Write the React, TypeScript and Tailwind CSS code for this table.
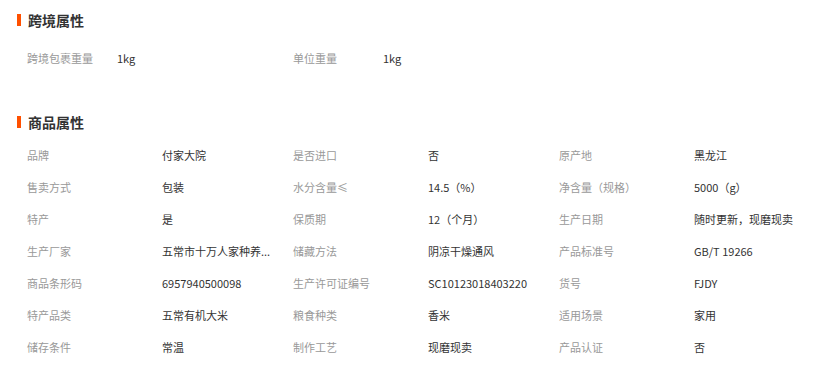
import React from "react"

type Attr = [string, string]

const crossBorder: Attr[] = [
  ["跨境包裹重量", "1kg"],
  ["单位重量", "1kg"],
]

const productAttrs: Attr[] = [
  ["品牌", "付家大院"],
  ["是否进口", "否"],
  ["原产地", "黑龙江"],
  ["售卖方式", "包装"],
  ["水分含量≤", "14.5（%）"],
  ["净含量（规格）", "5000（g）"],
  ["特产", "是"],
  ["保质期", "12（个月）"],
  ["生产日期", "随时更新，现磨现卖"],
  ["生产厂家", "五常市十万人家种养..."],
  ["储藏方法", "阴凉干燥通风"],
  ["产品标准号", "GB/T 19266"],
  ["商品条形码", "6957940500098"],
  ["生产许可证编号", "SC10123018403220"],
  ["货号", "FJDY"],
  ["特产品类", "五常有机大米"],
  ["粮食种类", "香米"],
  ["适用场景", "家用"],
  ["储存条件", "常温"],
  ["制作工艺", "现磨现卖"],
  ["产品认证", "否"],
]

function SectionTitle({ title }: { title: string }) {
  return (
    <div className="flex items-center h-[30px] pl-[17px]">
      <span className="w-[4px] h-[12px] bg-[#ff5000]" />
      <span className="ml-[7px] text-[14px] font-bold text-[#333]">{title}</span>
    </div>
  )
}

export default function App() {
  return (
    <div
      className="w-[825px] h-[366px] bg-white overflow-hidden pt-[5px]"
      style={{ fontFamily: '"Noto Sans CJK SC", "Noto Sans", sans-serif' }}
    >
      <SectionTitle title="跨境属性" />
      <div className="mt-[7px] pl-[27px] grid grid-cols-[90px_176px_90px_176px] text-[11px]">
        {crossBorder.map(([k, v]) => (
          <React.Fragment key={k}>
            <div className="h-8 leading-8 text-[#999]">{k}</div>
            <div className="h-8 leading-8 text-[#333]">{v}</div>
          </React.Fragment>
        ))}
      </div>

      <div className="mt-[33px]">
        <SectionTitle title="商品属性" />
      </div>
      <div className="mt-[2px] pl-[27px] grid grid-cols-[135px_131px_135px_131px_135px_131px] text-[11px]">
        {productAttrs.map(([k, v]) => (
          <React.Fragment key={k}>
            <div className="h-8 leading-8 text-[#999] whitespace-nowrap">{k}</div>
            <div className="h-8 leading-8 text-[#333] whitespace-nowrap">{v}</div>
          </React.Fragment>
        ))}
      </div>
    </div>
  )
}
